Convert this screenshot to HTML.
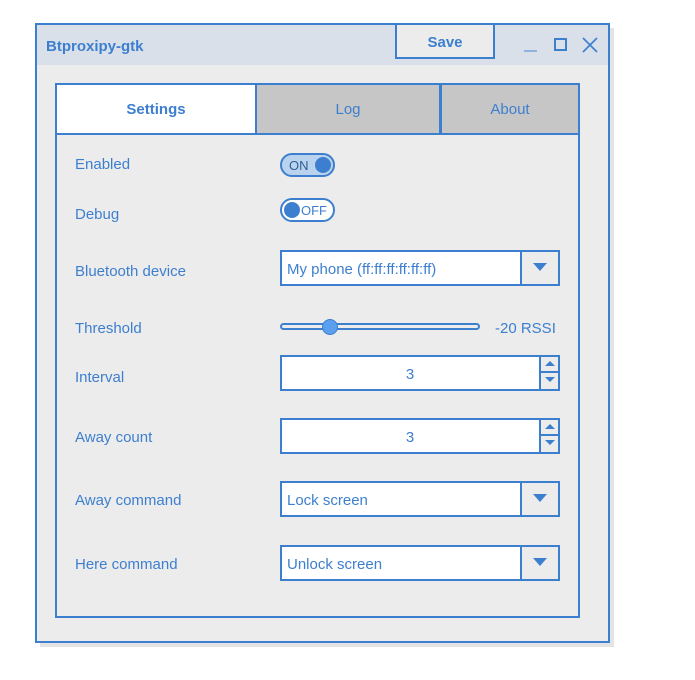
<!DOCTYPE html>
<html><head><style>
*{margin:0;padding:0;box-sizing:border-box}
body{width:695px;height:680px;background:#fff;position:relative;font-family:"Liberation Sans",sans-serif;color:#3d7fcf;overflow:hidden}
.a{position:absolute}
.lbl{position:absolute;left:75px;font-size:15px;color:#3d7fcf}
.combo{position:absolute;left:280px;width:280px;height:36px;border:2px solid #3d7fcf;background:#fff;font-size:15px}
.combo span{position:absolute;left:5px;top:9px}
.combo .btn{position:absolute;right:0;top:0;width:38px;height:32px;border-left:2px solid #3d7fcf;background:#ececec}
.combo .btn:after{content:"";position:absolute;left:11px;top:11px;border-left:7px solid transparent;border-right:7px solid transparent;border-top:8px solid #3d7fcf}
.spin{position:absolute;left:280px;width:280px;height:36px;border:2px solid #3d7fcf;background:#fff;font-size:15px;text-align:center}
.spin span{position:absolute;left:0;right:20px;top:9px}
.spin .ar{position:absolute;right:0;top:0;width:19px;height:32px;border-left:2px solid #3d7fcf;background:#ececec}
.spin .ar i{position:absolute;left:0;width:17px;height:16px}
.spin .ar i.u{top:0;border-bottom:2px solid #3d7fcf}
.spin .ar i.u:after{content:"";position:absolute;left:4px;top:4px;border-left:5px solid transparent;border-right:5px solid transparent;border-bottom:5px solid #3d7fcf}
.spin .ar i.d{top:16px}
.spin .ar i.d:after{content:"";position:absolute;left:4px;top:4px;border-left:5px solid transparent;border-right:5px solid transparent;border-top:5px solid #3d7fcf}
</style></head><body>
<div class="a" style="left:40px;top:28px;width:574px;height:619px;background:#e4e4e4"></div>
<div class="a" style="left:35px;top:23px;width:575px;height:620px;border:2px solid #3d7fcf;background:#ececec"></div>
<div class="a" style="left:37px;top:25px;width:571px;height:40px;background:#d9e0ea"></div>
<div class="a" style="left:46px;top:38px;font-size:15px;font-weight:bold">Btproxipy-gtk</div>
<div class="a" style="left:395px;top:23px;width:100px;height:36px;border:2px solid #3d7fcf;background:#ececec;font-weight:bold;font-size:15px;text-align:center;line-height:36px;padding-bottom:4px">Save</div>
<div class="a" style="left:524px;top:50px;width:13px;height:2px;background:#8fb2df"></div>
<div class="a" style="left:554px;top:38px;width:13px;height:13px;border:2px solid #3d7fcf"></div>
<svg class="a" style="left:582px;top:37px" width="16" height="16"><path d="M1 1L15 15M15 1L1 15" stroke="#3d7fcf" stroke-width="1.6"/></svg>
<div class="a" style="left:55px;top:83px;width:525px;height:535px;border:2px solid #3d7fcf;background:#ececec"></div>
<div class="a" style="left:57px;top:85px;width:198px;height:48px;background:#fff;text-align:center;line-height:49px;font-weight:bold;font-size:15px">Settings</div>
<div class="a" style="left:255px;top:83px;width:186px;height:52px;border:2px solid #3d7fcf;background:#c6c6c6;text-align:center;line-height:49px;font-size:15px">Log</div>
<div class="a" style="left:439px;top:83px;width:141px;height:52px;border:2px solid #3d7fcf;border-left-width:3px;background:#c6c6c6;text-align:center;line-height:49px;font-size:15px">About</div>
<div class="a" style="left:57px;top:133px;width:198px;height:2px;background:#3d7fcf"></div>

<div class="lbl" style="top:156px">Enabled</div>
<div class="lbl" style="top:206px">Debug</div>
<div class="lbl" style="top:263px">Bluetooth device</div>
<div class="lbl" style="top:320px">Threshold</div>
<div class="lbl" style="top:369px">Interval</div>
<div class="lbl" style="top:429px">Away count</div>
<div class="lbl" style="top:492px">Away command</div>
<div class="lbl" style="top:556px">Here command</div>

<div class="a" style="left:280px;top:153px;width:55px;height:24px;border:2px solid #3d7fcf;border-radius:12px;background:#b9d3ef;font-size:13px;color:#2f5e96">
<span class="a" style="left:7px;top:3px">ON</span><span class="a" style="left:33px;top:2px;width:16px;height:16px;border-radius:50%;background:#3d7fcf"></span></div>
<div class="a" style="left:280px;top:198px;width:55px;height:24px;border:2px solid #3d7fcf;border-radius:12px;background:#fff;font-size:13px">
<span class="a" style="left:2px;top:2px;width:16px;height:16px;border-radius:50%;background:#3d7fcf"></span><span class="a" style="left:19px;top:3px">OFF</span></div>

<div class="combo" style="top:250px"><span>My phone (ff:ff:ff:ff:ff:ff)</span><div class="btn"></div></div>

<div class="a" style="left:280px;top:323px;width:200px;height:7px;border:2px solid #3d7fcf;border-radius:4px;background:#ececec"></div>
<div class="a" style="left:322px;top:319px;width:16px;height:16px;border-radius:50%;background:#5ba0ef;border:1.5px solid #3d7fcf"></div>
<div class="a" style="left:495px;top:320px;font-size:15px">-20 RSSI</div>

<div class="spin" style="top:355px"><span>3</span><div class="ar"><i class="u"></i><i class="d"></i></div></div>
<div class="spin" style="top:418px"><span>3</span><div class="ar"><i class="u"></i><i class="d"></i></div></div>

<div class="combo" style="top:481px"><span>Lock screen</span><div class="btn"></div></div>
<div class="combo" style="top:545px"><span>Unlock screen</span><div class="btn"></div></div>
</body></html>
